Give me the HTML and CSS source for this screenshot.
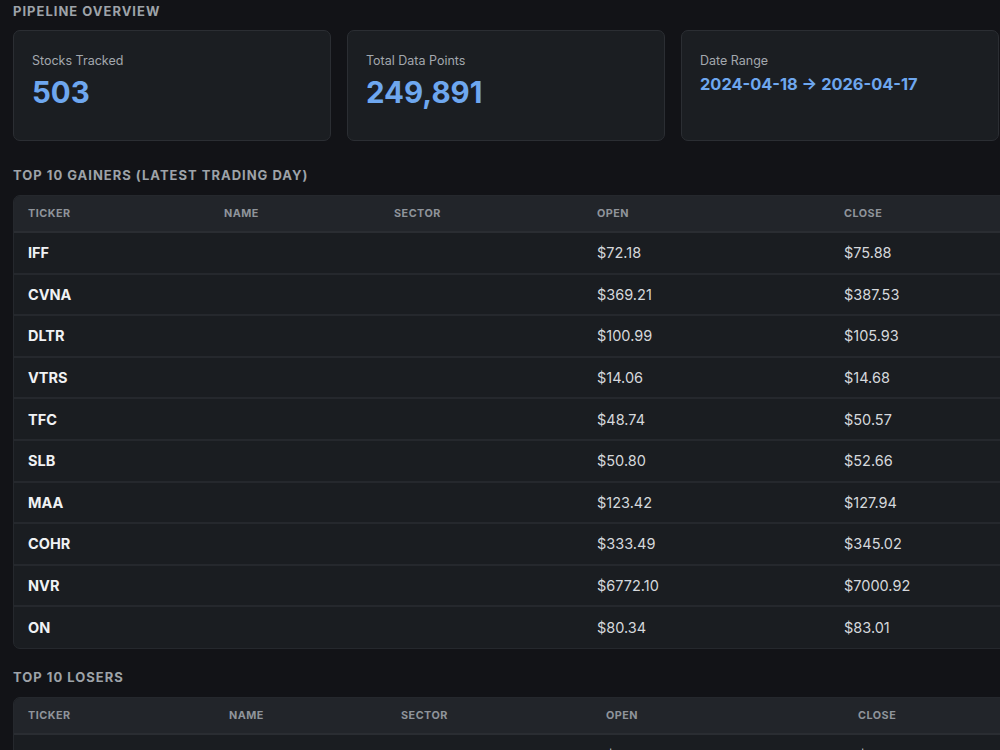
FILE: index.html
```html
<!DOCTYPE html>
<html lang="en">
<head>
<meta charset="utf-8">
<title>Pipeline Overview</title>
<link rel="stylesheet" href="styles.css">
</head>
<body>
<main class="page">
  <h2 class="section-title first">Pipeline Overview</h2>
  <div class="cards">
    <div class="card">
      <div class="card-label">Stocks Tracked</div>
      <div class="card-value">503</div>
    </div>
    <div class="card">
      <div class="card-label">Total Data Points</div>
      <div class="card-value">249,891</div>
    </div>
    <div class="card">
      <div class="card-label">Date Range</div>
      <div class="card-value small">2024-04-18 → 2026-04-17</div>
    </div>
  </div>

  <h2 class="section-title">Top 10 Gainers (Latest Trading Day)</h2>
  <div class="table-wrap">
    <table class="data gainers">
      <colgroup>
        <col class="c1"><col class="c2"><col class="c3"><col class="c4"><col class="c5">
      </colgroup>
      <thead>
        <tr><th>Ticker</th><th>Name</th><th>Sector</th><th>Open</th><th>Close</th></tr>
      </thead>
      <tbody>
        <tr><td class="tk">IFF</td><td></td><td></td><td>$72.18</td><td>$75.88</td></tr>
        <tr><td class="tk">CVNA</td><td></td><td></td><td>$369.21</td><td>$387.53</td></tr>
        <tr><td class="tk">DLTR</td><td></td><td></td><td>$100.99</td><td>$105.93</td></tr>
        <tr><td class="tk">VTRS</td><td></td><td></td><td>$14.06</td><td>$14.68</td></tr>
        <tr><td class="tk">TFC</td><td></td><td></td><td>$48.74</td><td>$50.57</td></tr>
        <tr><td class="tk">SLB</td><td></td><td></td><td>$50.80</td><td>$52.66</td></tr>
        <tr><td class="tk">MAA</td><td></td><td></td><td>$123.42</td><td>$127.94</td></tr>
        <tr><td class="tk">COHR</td><td></td><td></td><td>$333.49</td><td>$345.02</td></tr>
        <tr><td class="tk">NVR</td><td></td><td></td><td>$6772.10</td><td>$7000.92</td></tr>
        <tr><td class="tk">ON</td><td></td><td></td><td>$80.34</td><td>$83.01</td></tr>
      </tbody>
    </table>
  </div>

  <h2 class="section-title losers-title">Top 10 Losers</h2>
  <div class="table-wrap">
    <table class="data losers">
      <colgroup>
        <col class="c1"><col class="c2"><col class="c3"><col class="c4"><col class="c5">
      </colgroup>
      <thead>
        <tr><th>Ticker</th><th>Name</th><th>Sector</th><th>Open</th><th>Close</th></tr>
      </thead>
      <tbody>
        <tr><td class="tk">LYB</td><td></td><td></td><td>$79.10</td><td>$66.87</td></tr>
      </tbody>
    </table>
  </div>
</main>
</body>
</html>
```

FILE: styles.css
```css
html, body {
  margin: 0;
  padding: 0;
  background: #121317;
  overflow: hidden;
}

body {
  font-family: Inter, "Liberation Sans", Arial, sans-serif;
  color: #e6e8eb;
  width: 1000px;
  height: 750px;
}

.page {
  padding: 3px 0 0 13px;
  width: 1200px;
}

.section-title {
  margin: 22px 0 12px;
  font-size: 13px;
  line-height: 16px;
  font-weight: 700;
  letter-spacing: 1px;
  text-transform: uppercase;
  color: #9ea3a9;
}

.section-title.first {
  margin-top: 0;
  margin-bottom: 11px;
}

.section-title.losers-title {
  margin-top: 20px;
}

.cards {
  display: grid;
  grid-template-columns: 318px 318px 318px;
  gap: 16px;
  margin-bottom: 26px;
}

.card {
  background: #1b1e22;
  border: 1px solid #2b2e33;
  border-radius: 7px;
  height: 111px;
  box-sizing: border-box;
  padding: 22px 18px 0;
}

.card-label {
  font-size: 12.5px;
  line-height: 16px;
  color: #a3a8ae;
  margin-bottom: 4px;
}

.card-value {
  font-size: 29.5px;
  line-height: 38px;
  font-weight: 700;
  color: #6ea7ef;
}

.card-value.small {
  font-size: 16.4px;
  line-height: 24px;
  margin-top: -1px;
}

.table-wrap {
  width: 1150px;
  border: 1px solid #25282d;
  border-radius: 7px;
  overflow: hidden;
  background: #1a1d21;
}

.data {
  width: 100%;
  border-collapse: collapse;
  table-layout: fixed;
}

.data th {
  background: #22252a;
  height: 36px;
  box-sizing: border-box;
  padding: 0 0 0 14px;
  text-align: left;
  font-size: 10.8px;
  font-weight: 700;
  letter-spacing: 0.5px;
  text-transform: uppercase;
  color: #8f949b;
  border-bottom: 2px solid #2a2d32;
}

.data td {
  height: 41.6px;
  box-sizing: border-box;
  padding: 0 0 0 14px;
  font-size: 14.5px;
  color: #d5d8dc;
  border-bottom: 2px solid #25282d;
}

.data tbody tr:last-child td {
  border-bottom: none;
}

.data td.tk {
  font-weight: 700;
  color: #f0f2f4;
}

.gainers .c1 { width: 196px; }
.gainers .c2 { width: 170px; }
.gainers .c3 { width: 203px; }
.gainers .c4 { width: 247px; }

.losers .c1 { width: 201px; }
.losers .c2 { width: 172px; }
.losers .c3 { width: 205px; }
.losers .c4 { width: 252px; }
```
